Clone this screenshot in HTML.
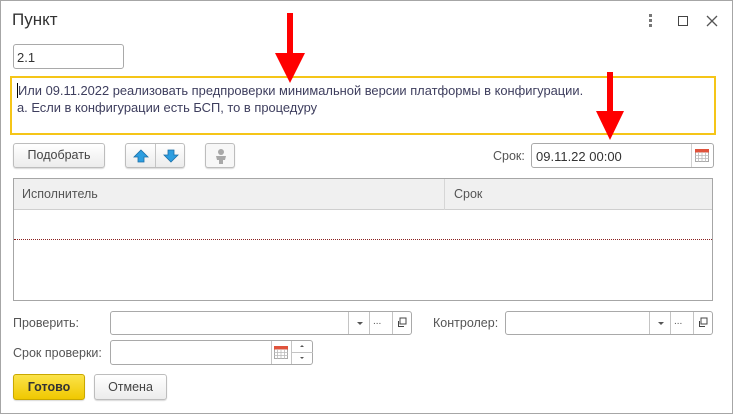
<!DOCTYPE html>
<html><head><meta charset="utf-8"><style>
*{box-sizing:border-box;margin:0;padding:0}
body{width:733px;height:414px;background:#fff;position:relative;overflow:hidden;font-family:"Liberation Sans",Arial,sans-serif;font-size:12px;color:#4d4d4d}
.a{position:absolute}
.win{left:0;top:0;width:733px;height:414px;border:1px solid #a6a6a6}
.inp{position:absolute;border:1px solid #a9a9a9;border-radius:3px;background:#fff}
.btn{position:absolute;border:1px solid #bdbdbd;border-radius:3px;background:linear-gradient(#fff,#ececec);box-shadow:0 1px 1px rgba(0,0,0,.15);text-align:center;line-height:23px;color:#444;font-size:12.5px}
.vd{position:absolute;top:0;bottom:0;width:1px;background:#c4c4c4}
.lbl{position:absolute;color:#555;font-size:12.5px}
</style></head><body>
<div class="a win"></div>
<div class="a" style="left:12px;top:10px;font-size:17px;color:#333">Пункт</div>
<div class="a" style="left:649px;top:14px;width:3px">
<div style="width:3px;height:3px;background:#777;margin-bottom:2px"></div><div style="width:3px;height:3px;background:#777;margin-bottom:2px"></div><div style="width:3px;height:3px;background:#777"></div></div>
<div class="a" style="left:678px;top:16px;width:10px;height:10px;border:1.5px solid #444"></div>
<svg class="a" style="left:706px;top:15px" width="12" height="12"><path d="M1 1L11 11M11 1L1 11" stroke="#555" stroke-width="1.3"/></svg>

<div class="inp" style="left:13px;top:44px;width:111px;height:25px;padding:5px 3px;font-size:13px;color:#333">2.1</div>
<div class="a" style="left:10px;top:76px;width:706px;height:59px;border:2px solid #f5c518;padding:4px 5px;font-size:12.9px;line-height:17px;color:#3e3e5e">
<span style="border-left:1px solid #000">И</span>ли 09.11.2022 реализовать предпроверки минимальной версии платформы в конфигурации.<br>а. Если в конфигурации есть БСП, то в процедуру</div>

<div class="btn" style="left:13px;top:143px;width:92px;height:25px">Подобрать</div>
<div class="btn" style="left:125px;top:143px;width:60px;height:25px"><div class="vd" style="left:29px"></div>
<svg class="a" style="left:7px;top:5px" width="16" height="14"><path d="M8 1L15 8H11V13H5V8H1Z" fill="#2d9ee0" stroke="#1b6fa8" stroke-width="0.8"/></svg>
<svg class="a" style="left:37px;top:5px" width="16" height="14"><path d="M8 13L15 6H11V1H5V6H1Z" fill="#2d9ee0" stroke="#1b6fa8" stroke-width="0.8"/></svg></div>
<div class="btn" style="left:205px;top:143px;width:30px;height:25px;background:#f7f7f7">
<svg class="a" style="left:7px;top:4px" width="16" height="17"><circle cx="8" cy="4" r="3" fill="#a8a8a8"/><path d="M3 8H13L12 12H10V16H6V12H4Z" fill="#a8a8a8"/></svg></div>

<div class="lbl" style="left:493px;top:149px">Срок:</div>
<div class="inp" style="left:531px;top:143px;width:183px;height:25px;padding:5px 4px;font-size:13px;color:#333">09.11.22 00:00
<div class="vd" style="left:159px;background:#d0d0d0"></div>
<svg class="a" style="left:163px;top:5px" width="14" height="13"><rect x="0.5" y="0.5" width="13" height="12" fill="#fff" stroke="#aaa"/><rect x="0" y="0" width="14" height="3.5" fill="#e0533c"/><path d="M0 6.5H14M0 9.5H14M3.5 3V13M7 3V13M10.5 3V13" stroke="#bbb" stroke-width="0.8"/></svg></div>

<div class="a" style="left:13px;top:178px;width:700px;height:123px;border:1px solid #a6a6a6">
<div class="a" style="left:0;top:0;width:698px;height:31px;background:#f0f0f0;border-bottom:1px solid #cfcfcf"></div>
<div class="a" style="left:430px;top:0;width:1px;height:31px;background:#d6d6d6"></div>
<div class="lbl" style="left:8px;top:8px">Исполнитель</div>
<div class="lbl" style="left:440px;top:8px">Срок</div>
<div class="a" style="left:0;top:60px;width:698px;border-top:1px dotted #8a2020"></div>
</div>

<div class="lbl" style="left:13px;top:316px">Проверить:</div>
<div class="inp" style="left:110px;top:311px;width:302px;height:24px"><div class="vd" style="left:237px"></div><div class="vd" style="left:258px"></div><div class="vd" style="left:281px"></div>
<div class="a" style="left:246px;top:10px;border:3px solid transparent;border-top:3px solid #555;border-bottom:0"></div>
<div class="a" style="left:262px;top:4px;font-size:10px;color:#555">...</div>
<svg class="a" style="left:285px;top:5px" width="12" height="12"><rect x="4" y="1" width="6" height="6" fill="none" stroke="#444"/><path d="M2.5 4V9.5H8" fill="none" stroke="#444"/></svg></div>
<div class="lbl" style="left:433px;top:316px">Контролер:</div>
<div class="inp" style="left:505px;top:311px;width:208px;height:24px"><div class="vd" style="left:143px"></div><div class="vd" style="left:164px"></div><div class="vd" style="left:187px"></div>
<div class="a" style="left:152px;top:10px;border:3px solid transparent;border-top:3px solid #555;border-bottom:0"></div>
<div class="a" style="left:168px;top:4px;font-size:10px;color:#555">...</div>
<svg class="a" style="left:191px;top:5px" width="12" height="12"><rect x="4" y="1" width="6" height="6" fill="none" stroke="#444"/><path d="M2.5 4V9.5H8" fill="none" stroke="#444"/></svg></div>

<div class="lbl" style="left:13px;top:346px">Срок проверки:</div>
<div class="inp" style="left:110px;top:340px;width:203px;height:25px"><div class="vd" style="left:160px"></div><div class="vd" style="left:180px"></div>
<div class="a" style="left:181px;top:11px;width:21px;height:1px;background:#c4c4c4"></div>
<svg class="a" style="left:163px;top:5px" width="14" height="13"><rect x="0.5" y="0.5" width="13" height="12" fill="#fff" stroke="#aaa"/><rect x="0" y="0" width="14" height="3.5" fill="#e0533c"/><path d="M0 6.5H14M0 9.5H14M3.5 3V13M7 3V13M10.5 3V13" stroke="#bbb" stroke-width="0.8"/></svg>
<div class="a" style="left:189px;top:4px;border:2px solid transparent;border-bottom:2px solid #555;border-top:0"></div>
<div class="a" style="left:189px;top:16px;border:2px solid transparent;border-top:2px solid #555;border-bottom:0"></div></div>

<div class="btn" style="left:13px;top:374px;width:72px;height:26px;background:linear-gradient(#fbe34a,#f0c800);border-color:#c9a800;color:#333;font-weight:bold;line-height:24px">Готово</div>
<div class="btn" style="left:94px;top:374px;width:73px;height:26px;line-height:24px">Отмена</div>

<svg class="a" style="left:0;top:0" width="733" height="414"><path d="M287 13H293V53H305L290 83L275 53H287Z" fill="#f00"/><path d="M607 72H613V111H624L610 140L596 111H607Z" fill="#f00"/></svg>
</body></html>
